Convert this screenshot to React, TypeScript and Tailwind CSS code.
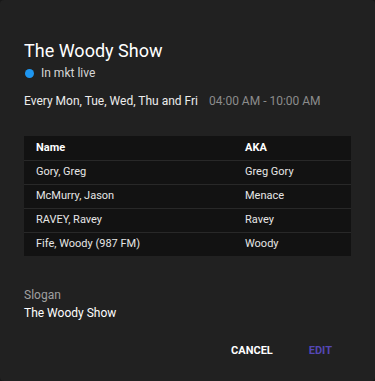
import React from 'react';

const hosts = [
  { name: 'Gory, Greg', aka: 'Greg Gory' },
  { name: 'McMurry, Jason', aka: 'Menace' },
  { name: 'RAVEY, Ravey', aka: 'Ravey' },
  { name: 'Fife, Woody (987 FM)', aka: 'Woody' },
];

export default function App() {
  return (
    <div className="w-[375px] h-[381px] bg-[#181818]" style={{ fontFamily: 'Roboto, "Liberation Sans", sans-serif' }}>
      <div className="w-full h-full rounded-[4px] bg-[#212121] text-white flex flex-col px-6 pt-[39px]">
        {/* Header */}
        <h1 className="text-[18px] leading-[24px] font-normal whitespace-nowrap">The Woody Show</h1>
        <div className="flex items-center gap-[7px] mt-[2px] text-[12px] leading-[16px] text-[#d6d6d6]">
          <span className="w-[9px] h-[9px] ml-[1px] rounded-full bg-[#1e96f0]" />
          <span>In mkt live</span>
        </div>

        {/* Schedule */}
        <div className="mt-[12px] text-[12px] leading-[16px] flex gap-[11px] whitespace-nowrap">
          <span className="text-[#ececec]">Every Mon, Tue, Wed, Thu and Fri</span>
          <span className="text-[#8c8c8c]">04:00 AM - 10:00 AM</span>
        </div>

        {/* Hosts table */}
        <table className="mt-[27px] w-full bg-[#121212] text-[11px] border-collapse">
          <thead>
            <tr className="h-[24px] border-b border-[#282828]">
              <th className="text-left font-bold pl-3 w-[221px] text-white">Name</th>
              <th className="text-left font-bold text-white">AKA</th>
            </tr>
          </thead>
          <tbody>
            {hosts.map((h, i) => (
              <tr key={h.name} className={`h-[24px] ${i < hosts.length - 1 ? 'border-b border-[#282828]' : ''}`}>
                <td className="pl-3 text-[#e6e6e6]">{h.name}</td>
                <td className="text-[#e6e6e6]">{h.aka}</td>
              </tr>
            ))}
          </tbody>
        </table>

        {/* Slogan */}
        <div className="mt-[30px] text-[12px] leading-[18px]">
          <div className="text-[#a0a0a0]">Slogan</div>
          <div className="text-white">The Woody Show</div>
        </div>

        {/* Actions */}
        <div className="mt-[21px] flex justify-end gap-[36px] pr-[19px] text-[11px] leading-[16px] font-bold">
          <button className="text-white">CANCEL</button>
          <button className="text-[#5447b5]">EDIT</button>
        </div>
      </div>
    </div>
  );
}
